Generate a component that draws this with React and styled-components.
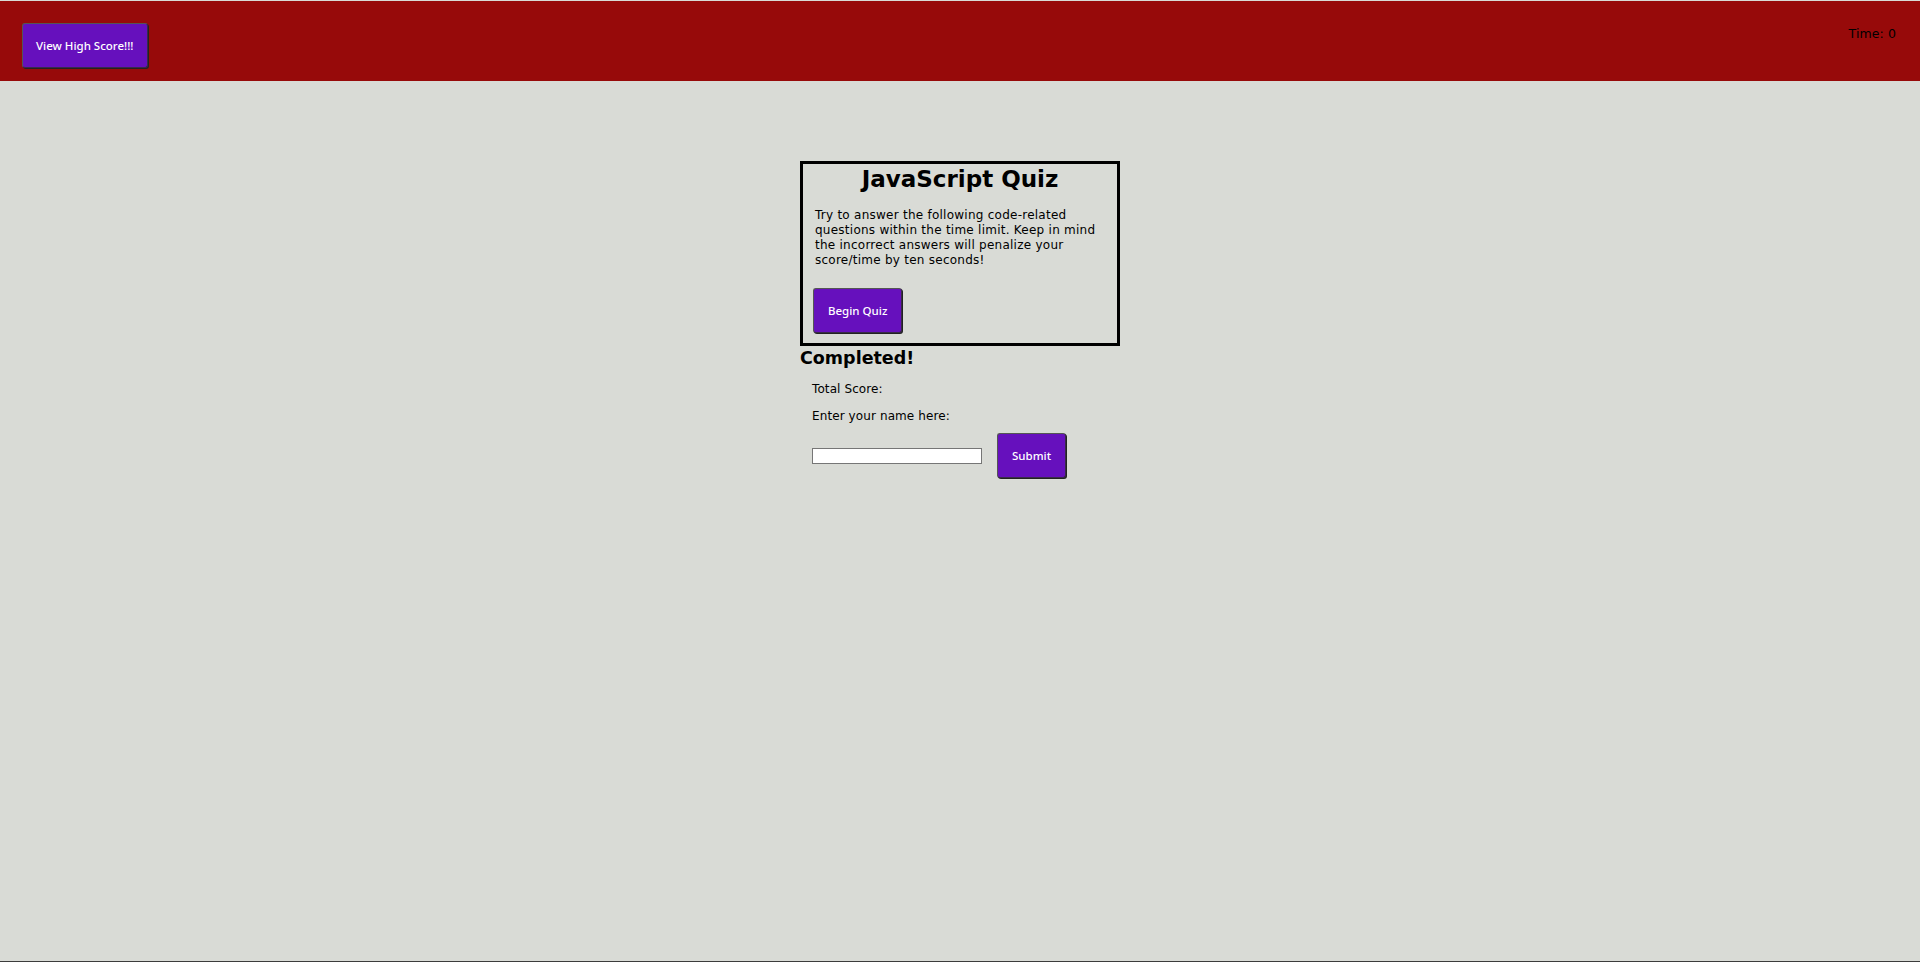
import React, { useState } from 'react';
import styled, { createGlobalStyle } from 'styled-components';

const GlobalStyle = createGlobalStyle`
  html, body {
    margin: 0;
    padding: 0;
    background: #d9dbd6;
  }
  body {
    font-family: "DejaVu Sans", Verdana, sans-serif;
    color: #000;
  }
`;

const Page = styled.div`
  min-height: 100vh;
  box-sizing: border-box;
  padding-top: 1px;
  border-bottom: 1px solid #3c3c3c;
`;

const Header = styled.header`
  height: 80px;
  background: #970a0a;
  display: flex;
  justify-content: space-between;
  align-items: flex-start;
  padding: 22px 24px 0 22px;
  box-sizing: border-box;
`;

const Timer = styled.p`
  margin: 3px 0 0;
  font-size: 12.5px;
  letter-spacing: 0.1px;
  color: #000;
`;

const PurpleButton = styled.button`
  height: 45px;
  padding: 0 ${(p) => p.$pad || 14}px;
  background: #6610bd;
  color: #fff;
  font-family: "Noto Sans", "Open Sans", sans-serif;
  font-size: 11.5px;
  font-weight: 500;
  border: 1px solid #3a2a4a;
  border-top-color: #555;
  border-left-color: #555;
  border-radius: 3px;
  box-shadow: 1px 1px 0 #222;
  cursor: pointer;
`;

const Main = styled.main`
  width: 320px;
  margin: 80px auto 0;
`;

const IntroBox = styled.section`
  border: 3px solid #000;
  padding: 0 10px 10px 10px;
`;

const Title = styled.h1`
  margin: 0;
  padding-top: 1px;
  text-align: center;
  font-size: 23px;
  font-weight: bold;
  line-height: 28px;
`;

const Intro = styled.p`
  margin: 15px 0 20px 2px;
  font-size: 12px;
  letter-spacing: 0.25px;
  line-height: 15px;
`;

const Completed = styled.h2`
  margin: 0;
  font-size: 17.5px;
  line-height: 24px;
`;

const Form = styled.div`
  padding-left: 12px;
`;

const Line = styled.p`
  margin: ${(p) => (p.$first ? 12 : 13)}px 0 0;
  font-size: 12px;
  letter-spacing: 0.1px;
  line-height: 14px;
`;

const Row = styled.div`
  display: flex;
  align-items: center;
  gap: 15px;
  margin-top: 10px;
`;

const NameInput = styled.input`
  width: 170px;
  height: 16px;
  box-sizing: border-box;
  border: 1px solid #767676;
  background: #fff;
  padding: 0 2px;
`;

const App = () => {
  const [name, setName] = useState('');
  return (
    <Page>
      <GlobalStyle />
      <Header>
        <PurpleButton $pad={13}>View High Score!!!</PurpleButton>
        <Timer>Time: 0</Timer>
      </Header>
      <Main>
        <IntroBox>
          <Title>JavaScript Quiz</Title>
          <Intro>
            Try to answer the following code-related questions within the time limit. Keep in mind
            the incorrect answers will penalize your score/time by ten seconds!
          </Intro>
          <PurpleButton>Begin Quiz</PurpleButton>
        </IntroBox>
        <Completed>Completed!</Completed>
        <Form>
          <Line $first>Total Score:</Line>
          <Line>Enter your name here:</Line>
          <Row>
            <NameInput value={name} onChange={(e) => setName(e.target.value)} />
            <PurpleButton>Submit</PurpleButton>
          </Row>
        </Form>
      </Main>
    </Page>
  );
};

export default App;
